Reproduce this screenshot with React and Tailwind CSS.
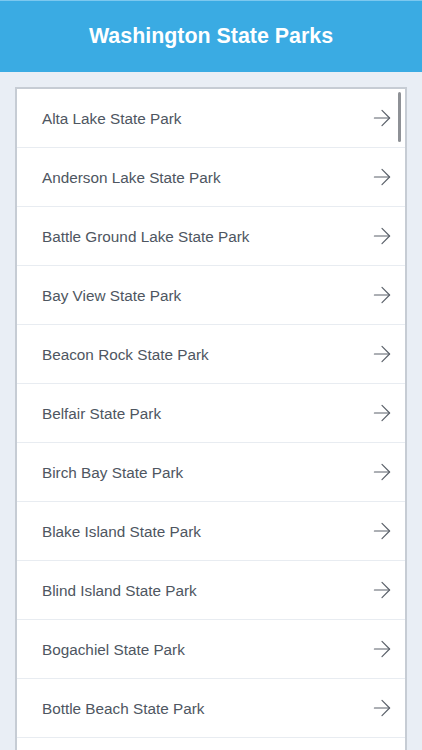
import { ArrowRight } from "lucide-react";

const parks = [
  "Alta Lake State Park",
  "Anderson Lake State Park",
  "Battle Ground Lake State Park",
  "Bay View State Park",
  "Beacon Rock State Park",
  "Belfair State Park",
  "Birch Bay State Park",
  "Blake Island State Park",
  "Blind Island State Park",
  "Bogachiel State Park",
  "Bottle Beach State Park",
];

export default function App() {
  return (
    <div className="h-[750px] overflow-hidden bg-[#e9eef5] font-['Liberation_Sans',Arial,sans-serif]">
      <header className="h-[72px] bg-[#3aabe3] border-t border-[#7cc8ef] flex items-center justify-center">
        <h1 className="text-white text-[21.4px] font-bold">Washington State Parks</h1>
      </header>

      <div className="px-[15px] pt-[15px]">
        <div className="relative bg-white border-2 border-[#c6ccd4]">
          <div className="absolute right-[4px] top-[3px] w-[3px] h-[50px] rounded-full bg-[#8e9196]" />
          {parks.map((p) => (
            <div
              key={p}
              className="h-[59px] border-b border-[#e8ecf1] flex items-center justify-between pl-[25px] pr-[10px]"
            >
              <span className="text-[15.3px] text-[#4e5661] pt-[2px]">{p}</span>
              <ArrowRight className="w-[26px] h-[26px] text-[#5b616a]" strokeWidth={1.1} />
            </div>
          ))}
          <div className="h-[59px]" />
        </div>
      </div>
    </div>
  );
}
